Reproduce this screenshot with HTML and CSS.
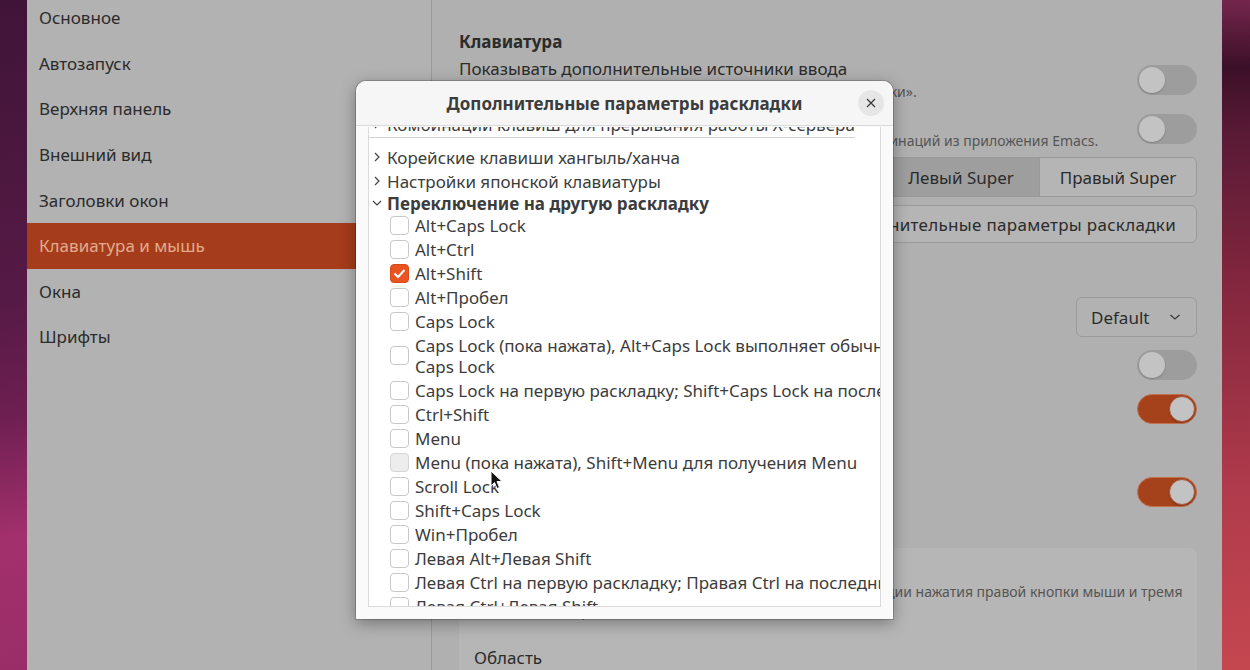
FILE: index.html
```html
<!DOCTYPE html>
<html lang="ru">
<head>
    <meta charset="UTF-8">
    <meta name="viewport" content="width=device-width, initial-scale=1.0">
    <title>Дополнительные параметры раскладки</title>
    <link rel="stylesheet" href="styles.css">
</head>
<body>
    <div class="desktop">
        <div class="wall wall-left"></div>
        <div class="window">
            <nav class="sidebar">
                <div class="nav-item first">Основное</div>
                <div class="nav-item">Автозапуск</div>
                <div class="nav-item">Верхняя панель</div>
                <div class="nav-item">Внешний вид</div>
                <div class="nav-item">Заголовки окон</div>
                <div class="nav-item selected">Клавиатура и мышь</div>
                <div class="nav-item">Окна</div>
                <div class="nav-item">Шрифты</div>
            </nav>
            <main class="panel">
                <h2 class="section-title">Клавиатура</h2>
                <div class="setting s-input">
                    <div class="label">
                        <div class="label-title">Показывать дополнительные источники ввода</div>
                        <div class="label-sub">Увеличивает выбор источников ввода в приложении «Настройки».</div>
                    </div>
                    <span class="switch"><span class="knob"></span></span>
                </div>
                <div class="setting s-emacs">
                    <div class="label">
                        <div class="label-title">Ввод Emacs</div>
                        <div class="label-sub">Заменяет все сочетания клавиш на привязки клавишных комбинаций из приложения Emacs.</div>
                    </div>
                    <span class="switch"><span class="knob"></span></span>
                </div>
                <div class="setting s-super">
                    <div class="label-title">Комбинация для обзора</div>
                    <div class="seg">
                        <span class="active">Левый Super</span>
                        <span>Правый Super</span>
                    </div>
                </div>
                <div class="setting s-layout">
                    <div class="label-title">Дополнительные параметры раскладки</div>
                    <span class="button">Дополнительные параметры раскладки</span>
                </div>

                <h2 class="section-title s-mouse">Мышь</h2>
                <div class="setting s-profile">
                    <div class="label-title">Профиль ускорения</div>
                    <span class="dropdown">Default
                        <svg width="12" height="8" viewBox="0 0 12 8"><polyline points="1.5,2 6,6 10.5,2" fill="none" stroke="#3a3a3a" stroke-width="1.3"/></svg>
                    </span>
                </div>
                <div class="setting s-pointer">
                    <div class="label-title">Расположение указателя</div>
                    <span class="switch"><span class="knob"></span></span>
                </div>
                <div class="setting s-paste">
                    <div class="label-title">Вставка средней кнопкой</div>
                    <span class="switch on"><span class="knob"></span></span>
                </div>

                <h2 class="section-title s-touch">Сенсорная панель</h2>
                <div class="setting s-typing">
                    <div class="label-title">Отключать при наборе текста</div>
                    <span class="switch on"><span class="knob"></span></span>
                </div>

                <div class="group">
                    <div class="option">
                        <div class="label-title">Пальцы</div>
                        <div class="label-sub">Щелчки по сенсорной панели двумя пальцами — для эмуляции нажатия правой кнопки мыши и тремя<br>пальцами для средней.</div>
                    </div>
                    <div class="option area">
                        <div class="label-title">Область</div>
                    </div>
                </div>
            </main>
        </div>
        <div class="wall wall-right"></div>
    </div>

    <div class="dialog">
        <div class="dialog-header">
            <span></span>
            <span class="dialog-title">Дополнительные параметры раскладки</span>
            <span class="close">
                <svg width="10" height="10" viewBox="0 0 10 10"><path d="M1 1L9 9M9 1L1 9" stroke="#3c3c3c" stroke-width="1.3" fill="none"/></svg>
            </span>
        </div>
        <div class="tree">
            <div class="tree-row expander cut">
                <svg class="arrow" width="8" height="10" viewBox="0 0 8 10"><polyline points="2,1 6,5 2,9" fill="none" stroke="#444" stroke-width="1.2"/></svg>
                Комбинации клавиш для прерывания работы X-сервера
            </div>
            <div class="tree-row expander">
                <svg class="arrow" width="8" height="10" viewBox="0 0 8 10"><polyline points="2,1 6,5 2,9" fill="none" stroke="#444" stroke-width="1.2"/></svg>
                Корейские клавиши хангыль/ханча
            </div>
            <div class="tree-row expander">
                <svg class="arrow" width="8" height="10" viewBox="0 0 8 10"><polyline points="2,1 6,5 2,9" fill="none" stroke="#444" stroke-width="1.2"/></svg>
                Настройки японской клавиатуры
            </div>
            <div class="tree-row expander open">
                <svg class="arrow" width="10" height="8" viewBox="0 0 10 8"><polyline points="1,2 5,6 9,2" fill="none" stroke="#444" stroke-width="1.2"/></svg>
                Переключение на другую раскладку
            </div>
            <div class="tree-row check"><span class="box"></span>Alt+Caps Lock</div>
            <div class="tree-row check"><span class="box"></span>Alt+Ctrl</div>
            <div class="tree-row check"><span class="box checked"><svg width="13" height="11" viewBox="0 0 13 11"><polyline points="1.5,5.5 5,9 11.5,2" fill="none" stroke="#fff" stroke-width="2"/></svg></span>Alt+Shift</div>
            <div class="tree-row check"><span class="box"></span>Alt+Пробел</div>
            <div class="tree-row check"><span class="box"></span>Caps Lock</div>
            <div class="tree-row check tall"><span class="box"></span><span>Caps Lock (пока нажата), Alt+Caps Lock выполняет обычное действие<br>Caps Lock</span></div>
            <div class="tree-row check"><span class="box"></span>Caps Lock на первую раскладку; Shift+Caps Lock на последнюю раскладку</div>
            <div class="tree-row check"><span class="box"></span>Ctrl+Shift</div>
            <div class="tree-row check"><span class="box"></span>Menu</div>
            <div class="tree-row check"><span class="box hover"></span>Menu (пока нажата), Shift+Menu для получения Menu</div>
            <div class="tree-row check"><span class="box"></span>Scroll Lock</div>
            <div class="tree-row check"><span class="box"></span>Shift+Caps Lock</div>
            <div class="tree-row check"><span class="box"></span>Win+Пробел</div>
            <div class="tree-row check"><span class="box"></span>Левая Alt+Левая Shift</div>
            <div class="tree-row check"><span class="box"></span>Левая Ctrl на первую раскладку; Правая Ctrl на последнюю раскладку</div>
            <div class="tree-row check"><span class="box"></span>Левая Ctrl+Левая Shift</div>
        </div>
    </div>

    <svg class="cursor" width="13" height="20" viewBox="0 0 13 20">
        <path d="M1 1 L1 16 L4.5 12.5 L7 18.5 L9.5 17.5 L7 11.5 L12 11.5 Z" fill="#111" stroke="#fff" stroke-width="1"/>
    </svg>
</body>
</html>
```

FILE: styles.css
```css
body{
    margin:0;
    width:1250px;
    height:670px;
    overflow:hidden;
    position:relative;
    font-family:"Noto Sans","Open Sans","DejaVu Sans",sans-serif;
    color:#2b2b2b;
}
.desktop{
    display:flex;
    height:670px;
}
.wall{
    flex:none;
}
.wall-left{
    width:27px;
    background:linear-gradient(172deg,#401438 0%,#561a46 45%,#6e1f52 62%,#a2306c 80%,#9a2d68 100%);
}
.wall-right{
    width:28px;
    background:linear-gradient(180deg,#74264c 0%,#3c1028 10%,#5a1a36 20%,#87283f 45%,#b23c4c 75%,#c4474f 100%);
}
.window{
    flex:1;
    min-width:0;
    display:flex;
    background:#b0b0b0;
}

/* sidebar */
.sidebar{
    width:404px;
    flex:none;
    background:#b2b2b2;
    border-right:1px solid #9a9a9a;
}
.nav-item{
    height:45.6px;
    display:flex;
    align-items:center;
    padding-left:12px;
    font-size:17px;
}
.nav-item.first{
    margin-top:-5px;
}
.nav-item.selected{
    background:#a53c1b;
    color:#e2ab8c;
}

/* main panel */
.panel{
    flex:1;
    padding:31px 25px 0 27px;
    min-width:0;
}
.section-title{
    margin:0;
    font-size:17px;
    line-height:22px;
    font-weight:bold;
}
.setting{
    display:flex;
    align-items:center;
    justify-content:space-between;
}
.label{
    flex:1;
    min-width:0;
}
.label-title{
    font-size:17px;
    line-height:22px;
    white-space:nowrap;
}
.label-sub{
    font-size:14px;
    line-height:20px;
    margin-top:2px;
    color:#555;
    white-space:nowrap;
}
.s-input{ margin-top:5px; }
.s-emacs{ margin-top:5px; }
.s-super{ margin-top:6px; }
.s-layout{ margin-top:8px; }
.s-mouse{ margin-top:16px; }
.s-profile{ margin-top:16px; }
.s-pointer{ margin-top:13px; }
.s-paste{ margin-top:14px; }
.s-touch{ margin-top:16px; }
.s-typing{ margin-top:15px; }

.switch{
    flex:none;
    width:60px;
    height:30px;
    box-sizing:border-box;
    border-radius:15px;
    background:#9d9d9d;
    display:flex;
    align-items:center;
    padding:2px;
}
.knob{
    width:26px;
    height:26px;
    border-radius:50%;
    background:#c3c3c3;
    box-shadow:0 1px 2px rgba(0,0,0,.2);
}
.switch.on{
    background:#a5421c;
    border:1px solid #c2704f;
    justify-content:flex-end;
    padding:1px;
}
.switch.on .knob{
    border:1px solid #a9573a;
    box-sizing:border-box;
}
.seg{
    display:flex;
    border:1px solid #999;
    border-radius:6px;
    overflow:hidden;
    font-size:17px;
}
.seg span{
    width:156px;
    height:38px;
    display:flex;
    align-items:center;
    justify-content:center;
    background:#b5b5b5;
}
.seg span + span{
    border-left:1px solid #999;
}
.seg .active{
    background:#9e9e9e;
}
.button{
    height:38px;
    box-sizing:border-box;
    padding:0 20px;
    display:flex;
    align-items:center;
    border:1px solid #9b9b9b;
    border-radius:6px;
    background:#b5b5b5;
    font-size:17px;
    letter-spacing:.3px;
}
.dropdown{
    width:121px;
    height:40px;
    box-sizing:border-box;
    display:flex;
    align-items:center;
    justify-content:space-between;
    padding:0 15px 0 14px;
    border:1px solid #9b9b9b;
    border-radius:6px;
    background:#b2b2b2;
    font-size:17px;
}
.group{
    margin-top:41px;
    background:#b6b6b6;
    border-radius:8px;
    padding:10px 15px;
}
.option .label-sub{
    line-height:19px;
}
.option.area{
    margin-top:27px;
}

/* dialog */
.dialog{
    position:absolute;
    left:356px;
    top:81px;
    width:537px;
    height:538px;
    background:#fafafa;
    border-radius:10px 10px 0 0;
    box-shadow:0 0 0 1px rgba(0,0,0,.18),0 4px 16px rgba(0,0,0,.35);
    display:flex;
    flex-direction:column;
}
.dialog-header{
    height:44px;
    flex:none;
    display:grid;
    grid-template-columns:1fr auto 1fr;
    align-items:center;
    background:#f6f6f6;
    border-bottom:1px solid #dadada;
    border-radius:10px 10px 0 0;
}
.dialog-title{
    font-size:17px;
    font-weight:bold;
    color:#3c3c3c;
}
.close{
    justify-self:end;
    margin-right:9px;
    width:26px;
    height:26px;
    border-radius:50%;
    background:#e6e6e6;
    display:flex;
    align-items:center;
    justify-content:center;
}
.tree{
    position:relative;
    margin:1px 12px 0;
    height:479px;
    background:#fff;
    border:1px solid #dadada;
    border-top:none;
    overflow:hidden;
    font-size:17px;
    color:#3c3c3c;
}
.tree::before{
    content:"";
    position:absolute;
    left:0;
    right:25px;
    top:10px;
    height:1px;
    background:#d0d0d0;
}
.tree-row{
    display:flex;
    align-items:center;
    height:24px;
    line-height:21px;
    white-space:nowrap;
}
.expander{
    padding-left:4px;
    gap:6px;
}
.expander.cut{
    margin-top:-15px;
    margin-bottom:9px;
}
.expander.open{
    height:20px;
    font-weight:bold;
    padding-left:3px;
    gap:5px;
}
.check{
    padding-left:21px;
    gap:6px;
}
.check.tall{
    height:45px;
}
.box{
    flex:none;
    width:19px;
    height:19px;
    box-sizing:border-box;
    border:1px solid #c8c8c8;
    border-radius:4px;
    background:#fff;
    display:flex;
    align-items:center;
    justify-content:center;
}
.box.checked{
    background:#e95420;
    border-color:#d84a18;
}
.box.hover{
    background:#ededed;
    border-color:#d6d6d6;
}
.cursor{
    position:absolute;
    left:490px;
    top:470px;
}
```
